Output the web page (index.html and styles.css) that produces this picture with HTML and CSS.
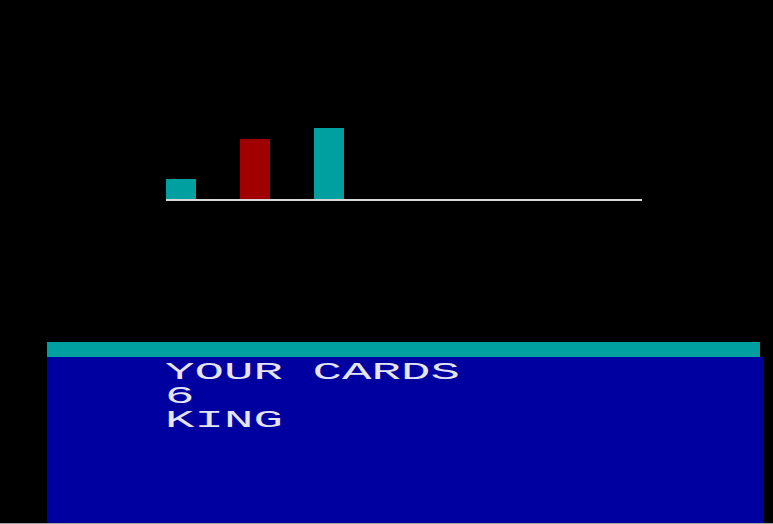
FILE: index.html
```html
<!DOCTYPE html>
<html>
<head>
<meta charset="utf-8">
<link rel="stylesheet" href="styles.css">
</head>
<body>
<div class="screen">
  <div class="chart">
    <div class="bars">
      <div class="bar cyan" style="height:20px"></div>
      <div class="bar red" style="height:60px"></div>
      <div class="bar cyan" style="height:71px"></div>
    </div>
    <div class="axis"></div>
  </div>
  <div class="panel">
    <div class="band"></div>
    <div class="body">
      <div class="text">
        <div class="line">YOUR CARDS</div>
        <div class="line">6</div>
        <div class="line">KING</div>
      </div>
    </div>
  </div>
  <div class="edge"></div>
</div>
</body>
</html>
```

FILE: styles.css
```css
html, body {
  margin: 0;
  padding: 0;
  background: #000;
}
.screen {
  width: 773px;
  height: 524px;
  background: #000;
  display: flex;
  flex-direction: column;
  overflow: hidden;
}
.chart {
  height: 201px;
  padding-left: 166px;
  display: flex;
  flex-direction: column;
  justify-content: flex-end;
  flex-shrink: 0;
}
.bars {
  display: flex;
  align-items: flex-end;
  gap: 44px;
}
.bar {
  width: 30px;
}
.cyan { background: #00a0a0; }
.red { background: #a00000; }
.axis {
  width: 476px;
  height: 2px;
  background: #d8d8d8;
}
.panel {
  margin-top: 141px;
  margin-left: 47px;
  width: 717px;
  height: 181px;
  display: flex;
  flex-direction: column;
  flex-shrink: 0;
}
.band {
  width: 713px;
  height: 15px;
  flex-shrink: 0;
  background: #00a0a0;
}
.body {
  flex: 1;
  background: #0000a0;
  padding: 4px 0 0 118px;
  overflow: hidden;
}
.text {
  font-family: "Liberation Mono", monospace;
  font-size: 21px;
  line-height: 21px;
  color: #e4e4f4;
  transform: scale(2.34, 1.14);
  transform-origin: left top;
}
.line {
  white-space: nowrap;
  height: 21px;
}
.edge {
  height: 1px;
  flex-shrink: 0;
  background: #a0a0a8;
}
```
